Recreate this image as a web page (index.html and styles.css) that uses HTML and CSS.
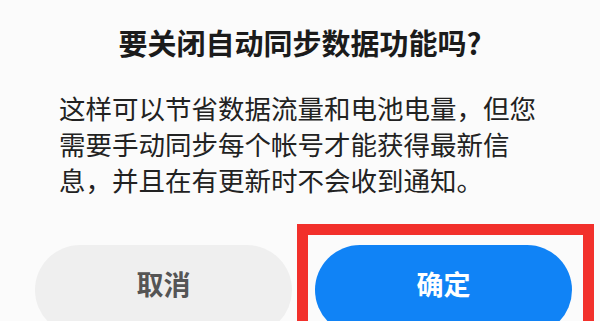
FILE: index.html
```html
<!DOCTYPE html>
<html lang="zh-CN">
<head>
  <meta charset="UTF-8" />
  <meta name="viewport" content="width=device-width, initial-scale=1.0"/>
  <title>关闭自动同步</title>
  <link rel="stylesheet" href="styles.css">
</head>
<body>
  <div class="dialog">
    <h1 class="title">要关闭自动同步数据功能吗?</h1>
    <p class="message">这样可以节省数据流量和电池电量，但您<br>需要手动同步每个帐号才能获得最新信<br>息，并且在有更新时不会收到通知。</p>
    <div class="actions">
      <button class="btn cancel">取消</button>
      <button class="btn confirm">确定<span class="mark"></span></button>
    </div>
  </div>
</body>
</html>
```

FILE: styles.css
```css
body {
  margin: 0;
  background: #fbfbfb;
  font-family: "Noto Sans CJK SC", "Noto Sans", sans-serif;
  overflow: hidden;
}

.dialog {
  height: 321px;
  overflow: hidden;
  padding-top: 22px;
  box-sizing: border-box;
}

.title {
  margin: 0;
  text-align: center;
  font-size: 29px;
  line-height: 40px;
  font-weight: 700;
  color: #1b1b1b;
}

.message {
  margin: 28px 0 0;
  padding: 0 40px 0 59px;
  font-size: 26.5px;
  line-height: 36px;
  color: #222;
}

.actions {
  display: flex;
  gap: 23px;
  margin-top: 47px;
  padding: 0 28px 0 35px;
}

.btn {
  flex: 1;
  height: 90px;
  border: none;
  border-radius: 45px;
  font-family: inherit;
  font-size: 27px;
  font-weight: 700;
  position: relative;
  padding-bottom: 14px;
}

.cancel {
  background: #efefef;
  color: #555;
}

.confirm {
  background: #1083f6;
  color: white;
}

.mark {
  position: absolute;
  top: -21px;
  left: -18px;
  right: -22px;
  bottom: -40px;
  border: 11px solid #f2302b;
}
```
